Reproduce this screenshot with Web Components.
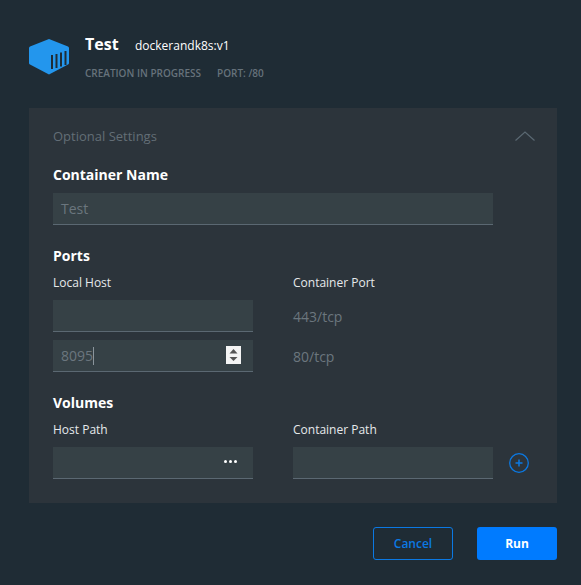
<!DOCTYPE html>
<html>
<head>
<meta charset="utf-8">
<style>
  html, body { margin: 0; height: 100%; background: #1f2c35; }
  body { font-family: "Open Sans", sans-serif; overflow: hidden; }
</style>
</head>
<body>
<run-dialog>
  <run-header slot="header" name="Test" image="dockerandk8s:v1" status="CREATION IN PROGRESS" port="PORT: /80"></run-header>
  <settings-panel title-text="Optional Settings">
    <field-section heading="Container Name">
      <text-field wide placeholder="Test"></text-field>
    </field-section>
    <field-section heading="Ports">
      <form-row>
        <field-label>Local Host</field-label>
        <field-label>Container Port</field-label>
      </form-row>
      <form-row>
        <text-field></text-field>
        <port-text>443/tcp</port-text>
      </form-row>
      <form-row>
        <text-field value="8095" spinner></text-field>
        <port-text>80/tcp</port-text>
      </form-row>
    </field-section>
    <field-section heading="Volumes">
      <form-row>
        <field-label>Host Path</field-label>
        <field-label>Container Path</field-label>
      </form-row>
      <form-row>
        <text-field dots></text-field>
        <text-field></text-field>
        <add-button></add-button>
      </form-row>
    </field-section>
  </settings-panel>
  <dialog-button slot="actions" kind="outline">Cancel</dialog-button>
  <dialog-button slot="actions" kind="primary">Run</dialog-button>
</run-dialog>

<script>
class RunDialog extends HTMLElement {
  constructor() {
    super();
    this.attachShadow({ mode: 'open' });
    this.shadowRoot.innerHTML = `
      <style>
        :host { display: block; box-sizing: border-box; width: 581px; height: 585px; padding: 36px 24px 0 29px; }
        .actions { display: flex; justify-content: flex-end; gap: 24px; margin-top: 24px; }
      </style>
      <slot name="header"></slot>
      <slot></slot>
      <div class="actions"><slot name="actions"></slot></div>
    `;
  }
}

class RunHeader extends HTMLElement {
  constructor() {
    super();
    this.attachShadow({ mode: 'open' });
    this.shadowRoot.innerHTML = `
      <style>
        :host { display: flex; height: 72px; gap: 16px; }
        svg { width: 40px; height: 36px; margin-top: 3px; flex: none; }
        .top { display: flex; align-items: baseline; height: 20px; margin-top: -2px; }
        .name { font-size: 16px; font-weight: 700; color: #fff; line-height: 20px; width: 50px; }
        .image { font-size: 12px; font-weight: 500; color: #fff; line-height: 20px; }
        .sub { display: flex; gap: 16px; margin-top: 12px; font-size: 10px; font-weight: 600; line-height: 14px; color: #66727b; }
      </style>
      <svg viewBox="0 0 40 36">
        <path d="M20 0 L39 7.500 Q40 8 40 9 V24 Q40 25 39 25.500 L20 35.500 L1 25.500 Q0 25 0 24 V9 Q0 8 1 7.500 Z" fill="#2396ed"/>
        <path d="M23 16 V30 M27.500 15 V29 M32 13.500 V27.500 M36.500 12 V26" stroke="#1f2c35" stroke-width="2"/>
      </svg>
      <div>
        <div class="top">
          <span class="name">${this.getAttribute('name')}</span>
          <span class="image">${this.getAttribute('image')}</span>
        </div>
        <div class="sub">
          <span>${this.getAttribute('status')}</span>
          <span>${this.getAttribute('port')}</span>
        </div>
      </div>
    `;
  }
}

class SettingsPanel extends HTMLElement {
  constructor() {
    super();
    this.attachShadow({ mode: 'open' });
    this.shadowRoot.innerHTML = `
      <style>
        :host { display: block; box-sizing: border-box; height: 395px; padding: 18px 22px 0 24px; background: #2c343b; }
        .title { display: flex; justify-content: space-between; align-items: center; height: 20px; font-size: 13px; color: #636e76; }
        svg { width: 20px; height: 10px; }
      </style>
      <div class="title">
        <span>${this.getAttribute('title-text')}</span>
        <svg viewBox="0 0 20 10"><path d="M0.500 9.500 L10 1 L19.500 9.500" fill="none" stroke="#5a6872" stroke-width="1.200"/></svg>
      </div>
      <slot></slot>
    `;
  }
}

class FieldSection extends HTMLElement {
  constructor() {
    super();
    this.attachShadow({ mode: 'open' });
    this.shadowRoot.innerHTML = `
      <style>
        :host { display: block; margin-top: 21px; }
        :host(:first-of-type) { margin-top: 19px; }
        h3 { margin: 0 0 9px; font-size: 14px; line-height: 20px; font-weight: 700; color: #fff; }
        :host(:first-of-type) h3 { margin-bottom: 8px; }
        .body { display: flex; flex-direction: column; gap: 8px; }
      </style>
      <h3>${this.getAttribute('heading')}</h3>
      <div class="body"><slot></slot></div>
    `;
  }
}

class FormRow extends HTMLElement {
  constructor() {
    super();
    this.attachShadow({ mode: 'open' });
    this.shadowRoot.innerHTML = `
      <style>
        :host { display: flex; align-items: center; gap: 40px; }
      </style>
      <slot></slot>
    `;
  }
}

class FieldLabel extends HTMLElement {
  constructor() {
    super();
    this.attachShadow({ mode: 'open' });
    this.shadowRoot.innerHTML = `
      <style>
        :host { display: block; width: 200px; margin-bottom: 1px; font-size: 12px; line-height: 16px; font-weight: 500; color: #e6e9eb; }
      </style>
      <slot></slot>
    `;
  }
}

class PortText extends HTMLElement {
  constructor() {
    super();
    this.attachShadow({ mode: 'open' });
    this.shadowRoot.innerHTML = `
      <style>
        :host { display: block; font-size: 14px; color: #6b767e; }
      </style>
      <slot></slot>
    `;
  }
}

class TextField extends HTMLElement {
  constructor() {
    super();
    this.attachShadow({ mode: 'open' });
    const value = this.getAttribute('value');
    const placeholder = this.getAttribute('placeholder');
    const text = value || placeholder || '';
    this.shadowRoot.innerHTML = `
      <style>
        :host { display: flex; align-items: center; box-sizing: border-box; position: relative; width: 200px; height: 32px; padding: 0 8px; background: #364146; border-bottom: 1px solid #5b6872; font-size: 14px; color: #6b767e; }
        :host([wide]) { width: 440px; }
        .caret { width: 1px; height: 18px; background: #8b959c; }
        .spin { position: absolute; right: 12px; top: 6px; width: 15px; height: 18px; background: #f4f4f4; }
        .spin svg { display: block; width: 15px; height: 18px; }
        .dots { position: absolute; right: 16px; top: 13px; display: flex; gap: 2px; }
        .dots i { width: 3px; height: 3px; border-radius: 50%; background: #fff; }
      </style>
      <span>${text}</span>
      ${value ? '<span class="caret"></span>' : ''}
      ${this.hasAttribute('spinner') ? `<span class="spin"><svg viewBox="0 0 15 18"><path d="M7.500 3 L11.500 7.500 H3.500 Z M3.500 11 H11.500 L7.500 15 Z" fill="#555"/></svg></span>` : ''}
      ${this.hasAttribute('dots') ? '<span class="dots"><i></i><i></i><i></i></span>' : ''}
    `;
  }
}

class AddButton extends HTMLElement {
  constructor() {
    super();
    this.attachShadow({ mode: 'open' });
    this.shadowRoot.innerHTML = `
      <style>
        :host { display: block; width: 20px; height: 20px; margin-left: -24px; }
        svg { display: block; }
      </style>
      <svg width="20" height="20" viewBox="0 0 20 20">
        <circle cx="10" cy="10" r="9.300" fill="none" stroke="#0b79e3" stroke-width="1.300"/>
        <path d="M10 6.500 V13.500 M6.500 10 H13.500" stroke="#0b79e3" stroke-width="1.500"/>
      </svg>
    `;
  }
}

class DialogButton extends HTMLElement {
  constructor() {
    super();
    this.attachShadow({ mode: 'open' });
    this.shadowRoot.innerHTML = `
      <style>
        :host { display: flex; align-items: center; justify-content: center; box-sizing: border-box; width: 80px; height: 33px; border-radius: 3px; font-size: 12px; font-weight: 600; }
        :host([kind="outline"]) { border: 1px solid #0b79e3; color: #0b79e3; }
        :host([kind="primary"]) { background: #007bff; color: #fff; font-weight: 700; }
      </style>
      <slot></slot>
    `;
  }
}

customElements.define('run-dialog', RunDialog);
customElements.define('run-header', RunHeader);
customElements.define('settings-panel', SettingsPanel);
customElements.define('field-section', FieldSection);
customElements.define('form-row', FormRow);
customElements.define('field-label', FieldLabel);
customElements.define('port-text', PortText);
customElements.define('text-field', TextField);
customElements.define('add-button', AddButton);
customElements.define('dialog-button', DialogButton);
</script>
</body>
</html>
